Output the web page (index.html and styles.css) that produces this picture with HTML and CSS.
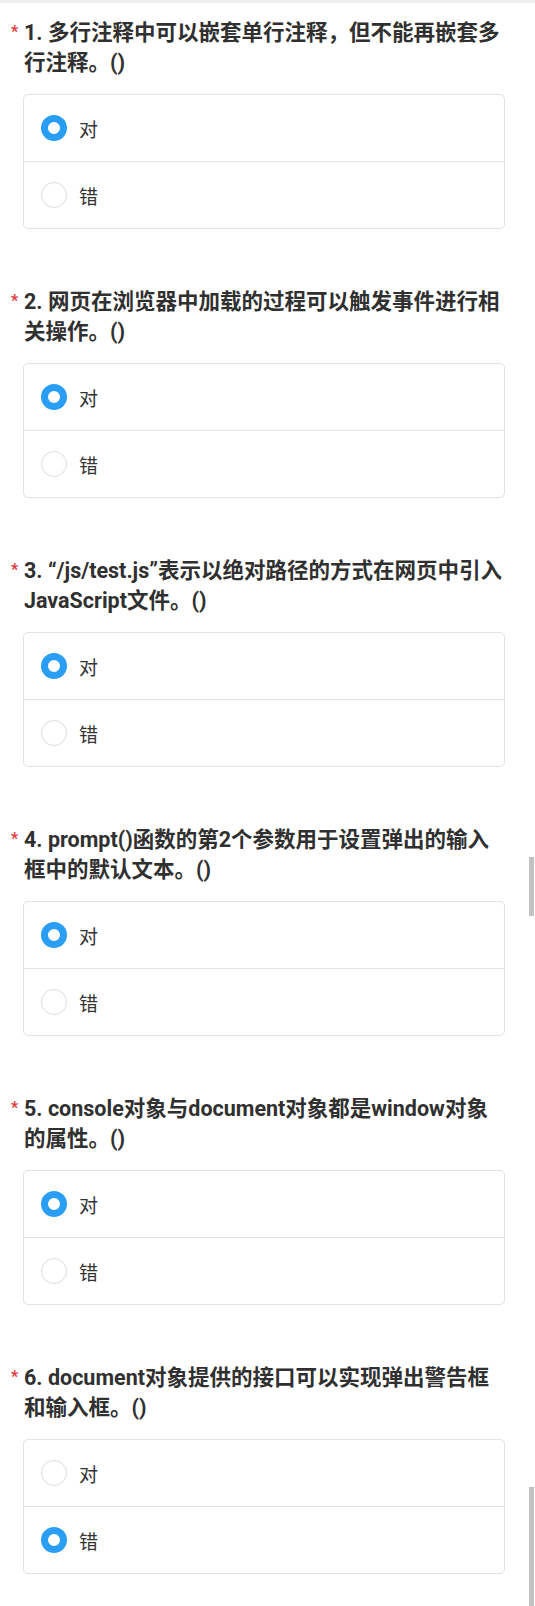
FILE: index.html
```html
<!DOCTYPE html>
<html lang="zh-CN">
<head>
<meta charset="utf-8">
<title>判断题</title>
<link rel="stylesheet" href="styles.css">
</head>
<body>
<div class="topbar"></div>
<main class="survey">
  <section class="question">
    <h2 class="q-title"><span class="req">*</span>1. 多行注释中可以嵌套单行注释，但不能再嵌套多行注释。()</h2>
    <div class="options">
      <div class="option"><span class="radio checked"></span><span class="opt-text">对</span></div>
      <div class="option"><span class="radio"></span><span class="opt-text">错</span></div>
    </div>
  </section>
  <section class="question">
    <h2 class="q-title"><span class="req">*</span>2. 网页在浏览器中加载的过程可以触发事件进行相关操作。()</h2>
    <div class="options">
      <div class="option"><span class="radio checked"></span><span class="opt-text">对</span></div>
      <div class="option"><span class="radio"></span><span class="opt-text">错</span></div>
    </div>
  </section>
  <section class="question">
    <h2 class="q-title"><span class="req">*</span>3. “/js/test.js”表示以绝对路径的方式在网页中引入JavaScript文件。()</h2>
    <div class="options">
      <div class="option"><span class="radio checked"></span><span class="opt-text">对</span></div>
      <div class="option"><span class="radio"></span><span class="opt-text">错</span></div>
    </div>
  </section>
  <section class="question">
    <h2 class="q-title"><span class="req">*</span>4. prompt()函数的第2个参数用于设置弹出的输入框中的默认文本。()</h2>
    <div class="options">
      <div class="option"><span class="radio checked"></span><span class="opt-text">对</span></div>
      <div class="option"><span class="radio"></span><span class="opt-text">错</span></div>
    </div>
  </section>
  <section class="question">
    <h2 class="q-title"><span class="req">*</span>5. console对象与document对象都是window对象的属性。()</h2>
    <div class="options">
      <div class="option"><span class="radio checked"></span><span class="opt-text">对</span></div>
      <div class="option"><span class="radio"></span><span class="opt-text">错</span></div>
    </div>
  </section>
  <section class="question">
    <h2 class="q-title"><span class="req">*</span>6. document对象提供的接口可以实现弹出警告框和输入框。()</h2>
    <div class="options">
      <div class="option"><span class="radio"></span><span class="opt-text">对</span></div>
      <div class="option"><span class="radio checked"></span><span class="opt-text">错</span></div>
    </div>
  </section>
</main>
<div class="scroll-thumb thumb-a"></div>
<div class="scroll-thumb thumb-b"></div>
</body>
</html>
```
FILE: styles.css
```css
html, body {
  margin: 0;
  padding: 0;
  background: #ffffff;
}
body {
  font-family: Roboto, "Noto Sans CJK SC", sans-serif;
  color: #333333;
}
.topbar {
  height: 3px;
  background: #f0f0f0;
}
.survey {
  padding: 0 30px 0 23px;
}
.question {
  padding: 15px 0 43px;
}
.q-title {
  margin: 0 0 16px;
  padding-left: 1px;
  text-indent: -13px;
  font-size: 21.5px;
  line-height: 30px;
  font-weight: 700;
  color: #303030;
}
.req {
  display: inline-block;
  width: 13px;
  text-indent: 0;
  vertical-align: top;
  margin-top: 6px;
  font-size: 16px;
  line-height: 16px;
  color: #e4393c;
  font-weight: 700;
}
.options {
  border: 1px solid #e2e2e2;
  border-radius: 5px;
}
.option {
  display: flex;
  align-items: center;
  gap: 12px;
  height: 66px;
  padding-left: 17px;
}
.option + .option {
  border-top: 1px solid #e2e2e2;
}
.radio {
  flex: none;
  width: 26px;
  height: 26px;
  box-sizing: border-box;
  border-radius: 50%;
  border: 1px solid #dcdcdc;
  background: #ffffff;
}
.radio.checked {
  border: 7.5px solid #2a9df4;
}
.opt-text {
  font-size: 19px;
  color: #333333;
}
.scroll-thumb {
  position: absolute;
  right: 1px;
  width: 5px;
  background: #c2c2c2;
}
.thumb-a {
  top: 857px;
  height: 59px;
}
.thumb-b {
  top: 1487px;
  height: 119px;
}
```
